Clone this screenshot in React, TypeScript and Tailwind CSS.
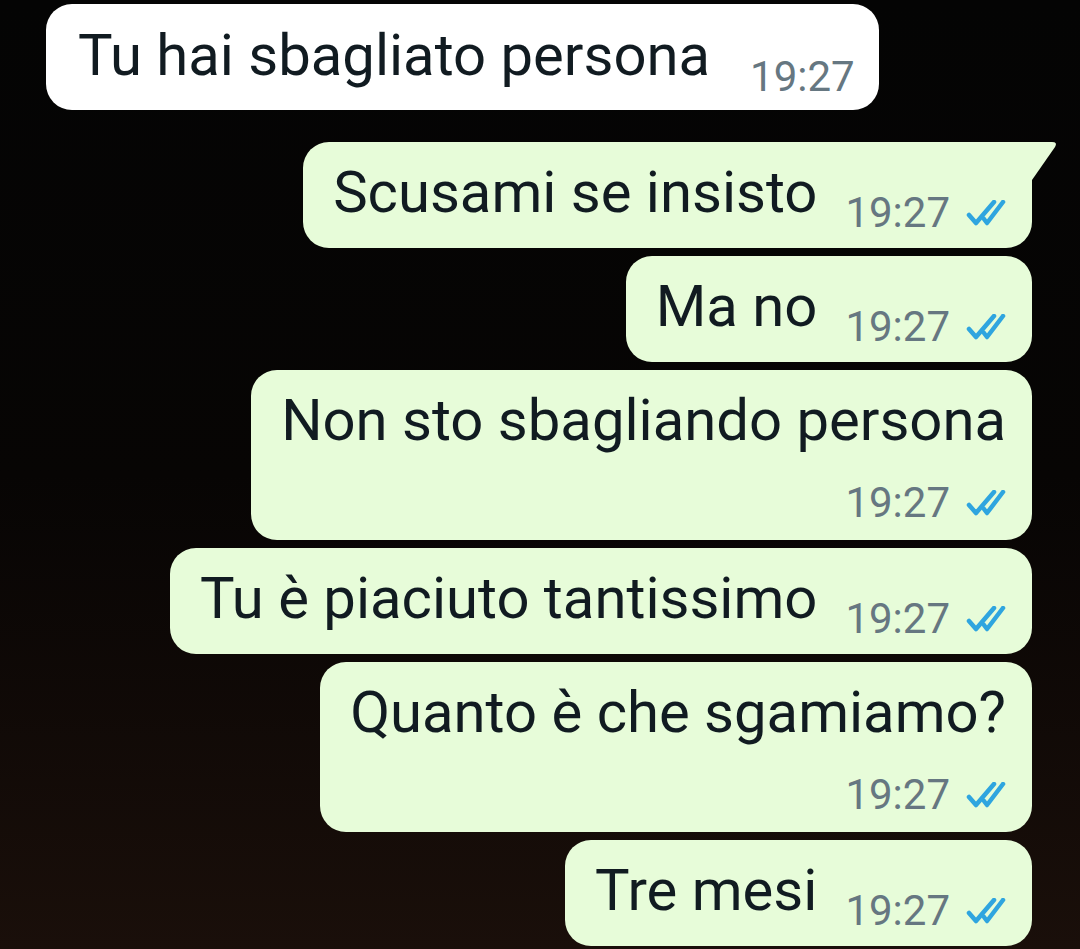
import React from 'react';

type Msg = { text: string; wrap?: boolean; tail?: boolean };

const OUTGOING: Msg[] = [
  { text: 'Scusami se insisto', tail: true },
  { text: 'Ma no' },
  { text: 'Non sto sbagliando persona', wrap: true },
  { text: 'Tu è piaciuto tantissimo' },
  { text: 'Quanto è che sgamiamo?', wrap: true },
  { text: 'Tre mesi' },
];

const Ticks = () => (
  <svg width="40" height="26" viewBox="0 0 40 26" fill="none" className="shrink-0">
    <path d="M3 15 L10 23 L28 2" stroke="#2fa5df" strokeWidth="4.5" strokeLinecap="round" strokeLinejoin="round" />
    <path d="M18 19 L21 23 L37 2" stroke="#2fa5df" strokeWidth="4.5" strokeLinecap="round" strokeLinejoin="round" />
  </svg>
);

const Meta = ({ ticks }: { ticks?: boolean }) => (
  <div className="flex items-center gap-[16px] shrink-0">
    <span className="text-[42px] leading-[52px] text-[#667781]">19:27</span>
    {ticks && <Ticks />}
  </div>
);

const Outgoing = ({ m }: { m: Msg }) => (
  <div className="relative self-end">
    <div
      className={
        'bg-[#e7fcd9] rounded-[26px] pl-[30px] pr-[26px] pt-[15px] ' +
        (m.tail ? 'rounded-tr-none ' : '') +
        (m.wrap ? 'flex flex-col pb-[11px]' : 'flex items-end gap-[28px] pb-[9px]')
      }
    >
      <span className={'text-[58px] leading-[70px] text-[#111b21] whitespace-nowrap ' + (m.wrap ? '' : 'mb-[12px]')}>
        {m.text}
      </span>
      {m.wrap ? (
        <div className="flex justify-end mt-[22px]">
          <Meta ticks />
        </div>
      ) : (
        <Meta ticks />
      )}
    </div>
    {m.tail && (
      <svg width="26" height="38" viewBox="0 0 26 38" className="absolute top-0 left-full">
        <path d="M0 0 H20 Q26 0 23 5 L0 38 Z" fill="#e7fcd9" />
      </svg>
    )}
  </div>
);

export default function App() {
  return (
    <div
      className="h-[949px] w-[1080px] overflow-hidden bg-gradient-to-b from-[#040404] via-[#070504] to-[#1a0f0a] pt-[4px] pl-[46px] pr-[48px] flex flex-col gap-[8px]"
      style={{ fontFamily: 'Roboto, "Noto Sans", sans-serif' }}
    >
      <div className="self-start bg-white rounded-[26px] pl-[32px] pr-[24px] pt-[16px] pb-[7px] flex items-end gap-[40px]">
        <span className="text-[58px] leading-[70px] text-[#111b21] whitespace-nowrap mb-[13px]">
          Tu hai sbagliato persona
        </span>
        <Meta />
      </div>
      <div className="h-[16px] shrink-0" />
      {OUTGOING.map((m, i) => (
        <Outgoing key={i} m={m} />
      ))}
    </div>
  );
}
